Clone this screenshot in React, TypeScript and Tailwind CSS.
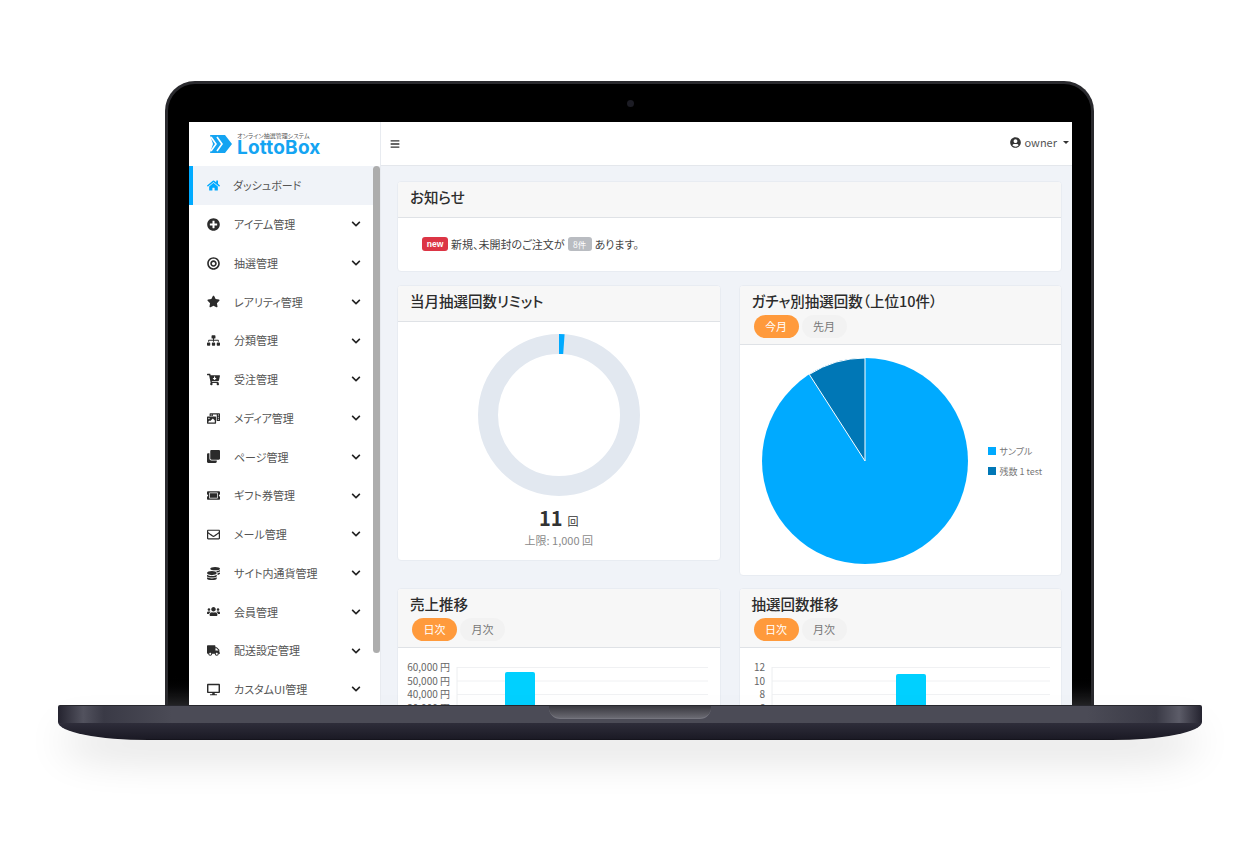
import React from 'react';
import type { IconType } from 'react-icons';
import {
  FaHome, FaPlusCircle, FaBullseye, FaStar, FaSitemap, FaCartArrowDown, FaPhotoVideo, FaClone,
  FaTicketAlt, FaRegEnvelope, FaCoins, FaUsers, FaTruck, FaDesktop, FaChevronDown, FaBars, FaUserCircle,
} from 'react-icons/fa';

const navItems: { label: string; icon: IconType }[] = [
  { label: 'アイテム管理', icon: FaPlusCircle },
  { label: '抽選管理', icon: FaBullseye },
  { label: 'レアリティ管理', icon: FaStar },
  { label: '分類管理', icon: FaSitemap },
  { label: '受注管理', icon: FaCartArrowDown },
  { label: 'メディア管理', icon: FaPhotoVideo },
  { label: 'ページ管理', icon: FaClone },
  { label: 'ギフト券管理', icon: FaTicketAlt },
  { label: 'メール管理', icon: FaRegEnvelope },
  { label: 'サイト内通貨管理', icon: FaCoins },
  { label: '会員管理', icon: FaUsers },
  { label: '配送設定管理', icon: FaTruck },
  { label: 'カスタムUI管理', icon: FaDesktop },
];

const Logo = () => (
  <div className="flex items-center h-[44px] pl-[20px] shrink-0">
    <svg width="24" height="22" viewBox="0 0 24 22">
      <path d="M1 2h15l7 9-7 9H1l3-9z" fill="#14a4f2" />
      <path d="M2 4l5 7-5 7M8 4l5 7-5 7" fill="none" stroke="#fff" strokeWidth="1.6" />
    </svg>
    <div className="ml-[4px] flex flex-col">
      <span className="text-[6px] leading-[7px] text-[#555]">オンライン抽選管理システム</span>
      <span className="text-[19px] leading-[18px] font-bold text-[#14a4f2] tracking-[0.2px] font-['Inter',sans-serif]">LottoBox</span>
    </div>
  </div>
);

const Sidebar = () => (
  <aside className="relative flex flex-col w-[192px] shrink-0 bg-white border-r border-[#e8ebf0]">
    <Logo />
    <div className="flex items-center h-[39px] bg-[#f0f3f8] border-l-[4px] border-[#00aaff] pl-[14px] shrink-0">
      <FaHome className="w-[13px] h-[13px] text-[#00aaff]" />
      <span className="ml-[13px] text-[11px] text-[#555]">ダッシュボード</span>
    </div>
    {navItems.map(({ label, icon: Icon }) => (
      <div key={label} className="flex items-center h-[38.75px] pl-[18px] pr-[19px] shrink-0">
        <Icon className="w-[13px] h-[13px] text-[#2b2b2b]" />
        <span className="ml-[14px] flex-1 text-[11px] text-[#555]">{label}</span>
        <FaChevronDown className="w-[10px] h-[10px] text-[#222]" />
      </div>
    ))}
    <div className="absolute top-[44px] right-0 w-[7px] h-[487px] rounded-[4px] bg-[#adadad]" />
  </aside>
);

const Card = ({ className = '', children }: { className?: string; children: React.ReactNode }) => (
  <section className={`bg-white border border-[#e8ecf2] rounded-[4px] overflow-hidden ${className}`}>{children}</section>
);

const CardHead = ({ title, tabs }: { title: string; tabs?: [string, string] }) => (
  <header className={`bg-[#f7f7f7] border-b border-[#dfe2e6] px-[12px] ${tabs ? 'h-[59px] pt-[5px]' : 'h-[36px] pt-[5px]'}`}>
    <h2 className="text-[14.5px] leading-[20px] font-medium text-[#2c2c2c]">{title}</h2>
    {tabs && (
      <div className="flex gap-[3px] mt-[4px] ml-[2px]">
        <span className="flex items-center justify-center w-[45px] h-[23px] rounded-full bg-[#ff9a3c] text-white text-[11px]">{tabs[0]}</span>
        <span className="flex items-center justify-center w-[45px] h-[23px] rounded-full bg-[#f2f2f2] text-[#777] text-[11px]">{tabs[1]}</span>
      </div>
    )}
  </header>
);

const Donut = () => (
  <svg width="162" height="162" viewBox="0 0 162 162">
    <circle cx="81" cy="81" r="71" fill="none" stroke="#e2e8f0" strokeWidth="20" />
    <path d="M81 0 A81 81 0 0 1 86.6 .2 L85.2 20.1 A61 61 0 0 0 81 20 Z" fill="#00aaff" />
  </svg>
);

const Pie = () => (
  <svg width="208" height="208" viewBox="0 0 208 208">
    <circle cx="104" cy="104" r="103" fill="#00aaff" />
    <path d="M104 104 L104 1 A103 103 0 0 0 48.3 17.4 Z" fill="#0077b6" stroke="#fff" strokeWidth="1" />
  </svg>
);

const BarChart = ({ labels, axisX, barX, barTop, right }: { labels: string[]; axisX: number; barX: number; barTop: number; right: number }) => (
  <svg width="321" height="80" viewBox="0 0 321 80" className="block">
    {labels.map((label, i) => (
      <g key={label}>
        <line x1={axisX} x2={right} y1={19.5 + i * 13.5} y2={19.5 + i * 13.5} stroke="#f0f1f3" />
        <text x={axisX - 7} y={23 + i * 13.5} textAnchor="end" fontSize="10" fill="#666">{label}</text>
      </g>
    ))}
    <line x1={axisX} x2={axisX} y1="19" y2="80" stroke="#eceef0" />
    <path d={`M${barX} 80V${barTop + 2}q0-2 2-2h26q2 0 2 2V80z`} fill="#00d0ff" />
  </svg>
);

const Dashboard = () => (
  <div className="flex-1 min-w-0 flex flex-col bg-[#f0f3f8] overflow-hidden">
    <div className="flex items-center justify-between h-[44px] shrink-0 bg-white border-b border-[#e4e7ec] pl-[9px] pr-[3px]">
      <FaBars className="w-[10px] h-[10px] text-[#333]" />
      <div className="flex items-center text-[11px] text-[#555] -mt-[2px]">
        <FaUserCircle className="w-[11px] h-[11px] text-[#333] mr-[3px]" />
        owner
        <span className="ml-[6px] border-x-[3px] border-t-[3px] border-x-transparent border-t-[#333]" />
      </div>
    </div>
    <div className="pt-[15px] pl-[16px] pr-[10px]">
      <Card>
        <CardHead title="お知らせ" />
        <div className="flex items-center h-[53px] pl-[24px] pb-[1px] text-[11px] text-[#444]">
          <span className="flex items-center justify-center w-[26px] h-[14px] rounded-[3px] bg-[#dc3545] text-white text-[8.5px] font-bold font-['Liberation_Sans',sans-serif]">new</span>
          <span className="ml-[3px]">新規、未開封のご注文が</span>
          <span className="flex items-center justify-center w-[24px] h-[14px] ml-[3px] rounded-[3px] bg-[#b9bcc1] text-white text-[8.5px]">8件</span>
          <span className="ml-[3px]">あります。</span>
        </div>
      </Card>
      <div className="grid grid-cols-2 gap-x-[18px] items-start mt-[13px]">
        <Card className="h-[276px]">
          <CardHead title="当月抽選回数リミット" />
          <div className="flex flex-col items-center pt-[12px]">
            <Donut />
            <div className="mt-[10px] leading-[24px] text-[#333]">
              <span className="text-[20px] font-bold">11</span>
              <span className="ml-[5px] text-[11px]">回</span>
            </div>
            <div className="text-[11px] leading-[14px] text-[#8a8a8a]">上限: 1,000 回</div>
          </div>
        </Card>
        <Card className="h-[291px]">
          <CardHead title="ガチャ別抽選回数（上位10件）" tabs={['今月', '先月']} />
          <div className="flex items-center pl-[21px] pt-[12px]">
            <Pie />
            <div className="ml-[19px] flex flex-col gap-[9px] text-[9px] leading-[11px] text-[#777]">
              <div className="flex items-center gap-[4px]"><span className="w-[8px] h-[8px] bg-[#00aaff]" />サンプル</div>
              <div className="flex items-center gap-[4px]"><span className="w-[8px] h-[8px] bg-[#0077b6]" />残数 1 test</div>
            </div>
          </div>
        </Card>
      </div>
      <div className="grid grid-cols-2 gap-x-[18px] items-start mt-[12px]">
        <Card>
          <CardHead title="売上推移" tabs={['日次', '月次']} />
          <BarChart labels={['60,000 円', '50,000 円', '40,000 円', '30,000 円']} axisX={59} barX={107} barTop={24} right={310} />
        </Card>
        <Card>
          <CardHead title="抽選回数推移" tabs={['日次', '月次']} />
          <BarChart labels={['12', '10', '8', '6']} axisX={32} barX={156} barTop={26} right={310} />
        </Card>
      </div>
    </div>
  </div>
);

export default function App() {
  return (
    <div className="flex flex-col items-center w-[1260px] h-[847px] overflow-hidden bg-white pt-[81px] text-[#333] font-['Noto_Sans_CJK_JP','Noto_Sans',sans-serif] [font-feature-settings:'palt']">
      {/* lid */}
      <div className="flex flex-col w-[929px] h-[624px] shrink-0 ml-[-1px] rounded-t-[30px] border-[3px] border-b-0 border-[#2a2a2e] pl-[21px] pr-[19px] bg-gradient-to-b from-black from-[95%] to-[#232325]">
        <div className="flex items-center justify-center h-[38px] shrink-0">
          <span className="w-[7px] h-[7px] rounded-full bg-[#1c1c24]" />
        </div>
        <div className="flex flex-1 min-h-0 overflow-hidden">
          <Sidebar />
          <Dashboard />
        </div>
      </div>
      {/* base */}
      <div className="flex flex-col w-[1144px] h-[35px] shrink-0 overflow-hidden rounded-bl-[90px_18px] rounded-br-[90px_18px] rounded-t-[2px] shadow-[0_22px_40px_-6px_rgba(0,0,0,0.16)]">
        <div className="flex justify-center h-[18px] shrink-0 border-t border-[#26262c] bg-[linear-gradient(90deg,#24232f_0%,#52525e_2.2%,#3a3a46_4%,#4b4b56_10%,#4b4b56_90%,#3a3a46_96%,#5c5c68_98%,#24232f_100%)]">
          <div className="w-[162px] h-[13px] rounded-b-[11px] border-b border-[#75757e] bg-gradient-to-b from-[#39383f] to-[#6a6a72]" />
        </div>
        <div className="flex-1 border-b border-[#15141d] bg-gradient-to-b from-[#2e2d3a] to-[#1b1a25]" />
      </div>
    </div>
  );
}
